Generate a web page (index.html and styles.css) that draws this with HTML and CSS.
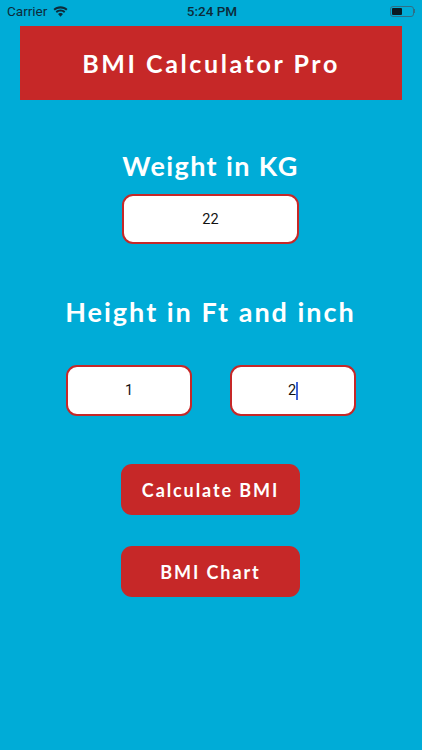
FILE: index.html
```html
<!DOCTYPE html>
<html lang="en">
<head>
    <meta charset="UTF-8">
    <meta name="viewport" content="width=device-width, initial-scale=1.0">
    <title>BMI Calculator Pro</title>
    <link rel="stylesheet" href="styles.css">
</head>
<body>
    <!-- Status bar -->
    <div class="status-bar">
        <div class="status-left">
            <span>Carrier</span>
            <svg class="wifi" width="15" height="11" viewBox="0 0 15 11">
                <path d="M7.5 2.4c2.2 0 4.2.8 5.7 2.2l1.3-1.5C12.6 1.3 10.2.3 7.5.3S2.4 1.3.5 3.1l1.3 1.5C3.3 3.2 5.3 2.4 7.5 2.4z"/>
                <path d="M7.5 5.6c1.3 0 2.5.5 3.5 1.3l1.3-1.4C11 4.3 9.3 3.6 7.5 3.6s-3.5.7-4.8 1.9L4 6.9c1-.8 2.2-1.3 3.5-1.3z"/>
                <path d="M7.5 10.7l2.5-2.7c-.6-.6-1.6-1.1-2.5-1.1S5.6 7.400 5 8z"/>
            </svg>
        </div>
        <div class="status-time">5:24 PM</div>
        <div class="status-right">
            <div class="battery"><div class="battery-level"></div></div>
            <div class="battery-tip"></div>
        </div>
    </div>

    <div class="header">BMI Calculator Pro</div>

    <div class="form">
        <div class="label weight-label">Weight in KG</div>
        <div class="field field-weight">22</div>

        <div class="label height-label">Height in Ft and inch</div>
        <div class="height-row">
            <div class="field field-small">1</div>
            <div class="field field-small">2<span class="caret"></span></div>
        </div>

        <button class="btn btn-calculate">Calculate BMI</button>
        <button class="btn btn-chart">BMI Chart</button>
    </div>
</body>
</html>
```

FILE: styles.css
```css
* {
    margin: 0;
    padding: 0;
    box-sizing: border-box;
}

body {
    width: 422px;
    height: 750px;
    overflow: hidden;
    background-color: #00acd7;
    font-family: 'Roboto', 'Liberation Sans', sans-serif;
}

/* Status bar */
.status-bar {
    height: 26px;
    padding: 0 7px 4px;
    display: grid;
    grid-template-columns: 1fr auto 1fr;
    align-items: center;
    font-size: 13.5px;
    color: #0d2b3a;
}

.status-left {
    display: flex;
    align-items: center;
    gap: 6px;
}

.wifi {
    fill: #0d2b3a;
}

.status-time {
    margin-left: 2px;
    font-weight: 500;
}

.status-right {
    display: flex;
    justify-content: flex-end;
    align-items: center;
}

.battery {
    width: 24px;
    height: 11px;
    padding: 1px;
    border: 1px solid #2f6f86;
    border-radius: 3px;
}

.battery-level {
    width: 10px;
    height: 100%;
    background-color: #0a1a22;
    border-radius: 1px;
}

.battery-tip {
    width: 1px;
    height: 4px;
    background-color: #2f6f86;
}

/* Title */
.header {
    height: 74px;
    margin: 0 20px;
    display: flex;
    align-items: center;
    justify-content: center;
    background-color: #c62828;
    color: #fff;
    font-family: 'Lato', sans-serif;
    font-size: 25px;
    font-weight: 700;
    letter-spacing: 2.6px;
}

/* Form */
.form {
    width: 421px;
    display: flex;
    flex-direction: column;
    align-items: center;
}

.label {
    color: #fff;
    font-family: 'Lato', sans-serif;
    font-size: 27px;
    font-weight: 700;
    line-height: 32px;
}

.weight-label {
    margin-top: 50px;
    letter-spacing: 1.4px;
}

.height-label {
    margin-top: 52px;
    letter-spacing: 2px;
}

.field {
    display: flex;
    align-items: center;
    justify-content: center;
    height: 51px;
    background-color: #fff;
    border: 2px solid #c62828;
    border-radius: 11px;
    color: #111;
    font-size: 14.5px;
}

.field-weight {
    width: 177px;
    height: 50px;
    margin-top: 12px;
}

.height-row {
    display: flex;
    gap: 38px;
    margin-top: 37px;
    margin-left: 1px;
}

.field-small {
    width: 126px;
}

.caret {
    width: 2px;
    height: 18px;
    background-color: #3f63d8;
}

.btn {
    display: block;
    width: 179px;
    height: 51px;
    border: none;
    border-radius: 11px;
    background-color: #c62828;
    color: #fff;
    font-family: 'Lato', sans-serif;
    font-size: 18px;
    font-weight: 700;
    letter-spacing: 1.9px;
}

.btn-calculate {
    margin-top: 48px;
}

.btn-chart {
    margin-top: 31px;
}
```
